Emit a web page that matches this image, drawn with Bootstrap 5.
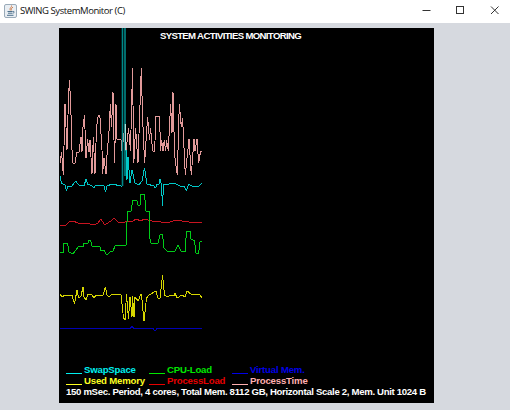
<!DOCTYPE html>
<html lang="en">
<head>
<meta charset="utf-8">
<title>SWING SystemMonitor (C)</title>
<link href="https://cdn.jsdelivr.net/npm/bootstrap@5.3.0/dist/css/bootstrap.min.css" rel="stylesheet">
<style>
body{background:#d6d9df;overflow:hidden}
.titlebar{height:23px;font:9.5px/22px "Open Sans","Noto Sans",sans-serif;color:#111;padding-left:4px}
.window-name{letter-spacing:-.43px;margin-left:3px}
.controls{width:102px;height:22px}
.monitor{width:375px;height:375px;margin:5px 0 0 59px;background:#000;color:#fff;font:bold 9.6px/11px "Liberation Sans",Arial,sans-serif}
.plot{inset:0}
.plot polyline{fill:none;stroke-width:1;stroke-linejoin:bevel;shape-rendering:crispEdges}
.heading{padding-top:2px;padding-right:32px;letter-spacing:-.65px}
.legend-block{padding:0 0 6px 7px}
.legend-grid{display:grid;grid-template-columns:83px 83px 100px;grid-auto-rows:11px;letter-spacing:-.18px;white-space:nowrap}
.key{flex:none;width:16px;height:1px;background:currentColor;margin:9px 2px 0 0}
.summary{letter-spacing:-.32px}
.c-swap{color:#00f0f0}.c-cpu{color:#00e800}.c-virt{color:#0000e6}
.c-used{color:#ffff20}.c-proc{color:#e60000}.c-time{color:#ffafaf}
</style>
</head>
<body class="d-flex flex-column vh-100">
<header class="titlebar bg-white d-flex justify-content-between flex-shrink-0">
  <div class="d-flex">
    <svg class="mt-1" width="13" height="14" viewBox="0 0 13 14" fill="none">
      <rect x=".5" y=".5" width="12" height="13" rx="1.5" fill="#e9eef3" stroke="#9aabb9"/>
      <path d="M7.5 1.5c.8 1.6-2.6 2.4-1.2 5M9 3.2C7 4.2 7.3 5 7.6 6.4" stroke="#d08050"/>
      <path d="M3.5 7.5h5.2M4 9.2h4.3M3 11.3h6.5M9 7.4c1.8-.2 1.4 1.6-.3 1.8" stroke="#4c708c"/>
    </svg>
    <span class="window-name">SWING SystemMonitor (C)</span>
  </div>
  <svg class="controls" viewBox="408 0 102 22" fill="none" stroke="#333">
    <path d="M422.5 10.5h8"/><rect x="456.5" y="6.5" width="7" height="7"/>
    <path d="M491 6.5l7.5 7.5m0-7.5l-7.5 7.5"/>
  </svg>
</header>
<main class="monitor position-relative d-flex flex-column justify-content-between flex-shrink-0">
  <svg class="plot position-absolute" width="375" height="375" viewBox="59 28 375 375">
    <polyline stroke="#e29a9a" points="60,163 61.6,152 63.3,175 65,104 67,150 68,115 69.3,80 70.6,100 72,150 72.7,163 75.3,163 76.7,152 79,152 81,137 82,152 83,127 84.5,115 86,158 87.6,139 89,152 90,140 92,174 93.3,137 95,174 96.5,128 98.3,115 99.8,115 102,150 102.5,174 104,158 106,174 107,155 109.3,127 110.3,104 111.5,127 113,92 114.5,163 116,104 117,139 121,140 122,151 125,124 126,151 128.5,128 130.5,151 132.5,68 133.8,163 135.6,128 138,163 141.3,68 142.5,115 144.6,163 147.6,117 149.5,140 150.6,128 152.6,151 154.6,151 156,116 159.6,116 160.5,151 161.6,140 163,151 164.3,140 165.6,151 166.6,140 168.3,151 170.6,104 172,133 173,92 174.6,155 177.3,175 179.3,104 181.3,127 182.6,118 185.3,175 189,139 191.3,175 194,139 195,151 197,139 198.6,163 200.6,151 202,151"/>
    <polyline stroke="#00c8c8" points="60,176 61.5,183 65,185 66.5,191 68,186 72,186 75.5,181 79,185 84,186 86,179 87.5,184 92,186 94,188 95.5,185 104,186 105.5,192 107,186 112,184 121,186 122,186"/>
    <path d="M122.5 28V186M125 28V176" stroke="#008888" fill="none" stroke-width="1.6"/>
    <path d="M125.5 124V150" stroke="#a8e0dc"/>
    <polyline stroke="#00c8c8" points="126,150 127,180 128,157 130,183 132,170 135,183 139,185 142,181 144.5,168 147,184 154,186 155.5,188 157,184 159,184 160,179 161.5,185 162.5,206 163.5,185 174,183 180,186 184,186 186.5,191 188.5,184 194,187 199,186 202,183"/>
    <polyline stroke="#c81420" points="60,225 66,225 69,222 73,221 78,223 90,224 94,225 98,223 101,219 104,224 106,224 111,221 114,218 118,222 125,222 133,221 136,219 141,221 144,219 152,221 161,222 168,223 175,220 189,222 202,223"/>
    <polyline stroke="#00cc18" points="60,252 63.5,252 64,243 67.5,243 69,252 73,254 76,250 79,246 83,247 84,243 88,243 88.5,240 90.5,240 92,246 100,247 101,251 104,250 106,254 108,254 110,252 113,251 115,246 126.5,245 127,222 128,211 131,211 133,200 137,201 138,205 140,205 141,194 144.5,194 146,211 149.5,212 150,239 151,243 158,243 160,235 162.5,234 164,248 168,252 175,251 178,245 181,251 185,252 186.5,231 190,231 191,239 194.5,241 196,253 198.5,254 200,242 202,241"/>
    <polyline stroke="#d6d600" points="60,294 62,297 65,295 72,295 74.5,304 77,290 78.5,298 81,296 83,287 84,297 86,300 88,294 92,295 94,298 96,295 103,295 105.5,287 107,295 109,297 112,294 121,295 123.5,318 125,320 126.5,294 128.5,319 130,297 132,317 132.5,296 134,317 135,297 138,301 141,294 142,300 144,321 146.5,298 149,295 156,291 158,298 160,298 162.5,275 164.5,295 168,297 170,295 174,296 175,293 177,298 182,295 185,297 187,291 191,294 200,295 202,298"/>
    <polyline stroke="#0000b4" points="60,328.5 130,328.5 132,326.5 134,328.5 153,328.5 155,331 157,328.5 202,328.5"/>
  </svg>
  <div class="heading text-center position-relative"><span>SYSTEM ACTIVITIES MONITORING</span></div>
  <div class="legend-block position-relative">
    <div class="legend-grid">
      <div class="c-swap d-flex"><i class="key"></i>SwapSpace</div>
      <div class="c-cpu d-flex"><i class="key"></i>CPU-Load</div>
      <div class="c-virt d-flex"><i class="key"></i>Virtual Mem.</div>
      <div class="c-used d-flex"><i class="key"></i>Used Memory</div>
      <div class="c-proc d-flex"><i class="key"></i>ProcessLoad</div>
      <div class="c-time d-flex"><i class="key"></i>ProcessTime</div>
    </div>
    <div class="summary text-nowrap"><span>150 mSec. Period, 4 cores, Total Mem. 8112 GB, Horizontal Scale 2, Mem. Unit 1024 B</span></div>
  </div>
</main>
<script src="https://cdn.jsdelivr.net/npm/bootstrap@5.3.0/dist/js/bootstrap.bundle.min.js"></script>
</body>
</html>
